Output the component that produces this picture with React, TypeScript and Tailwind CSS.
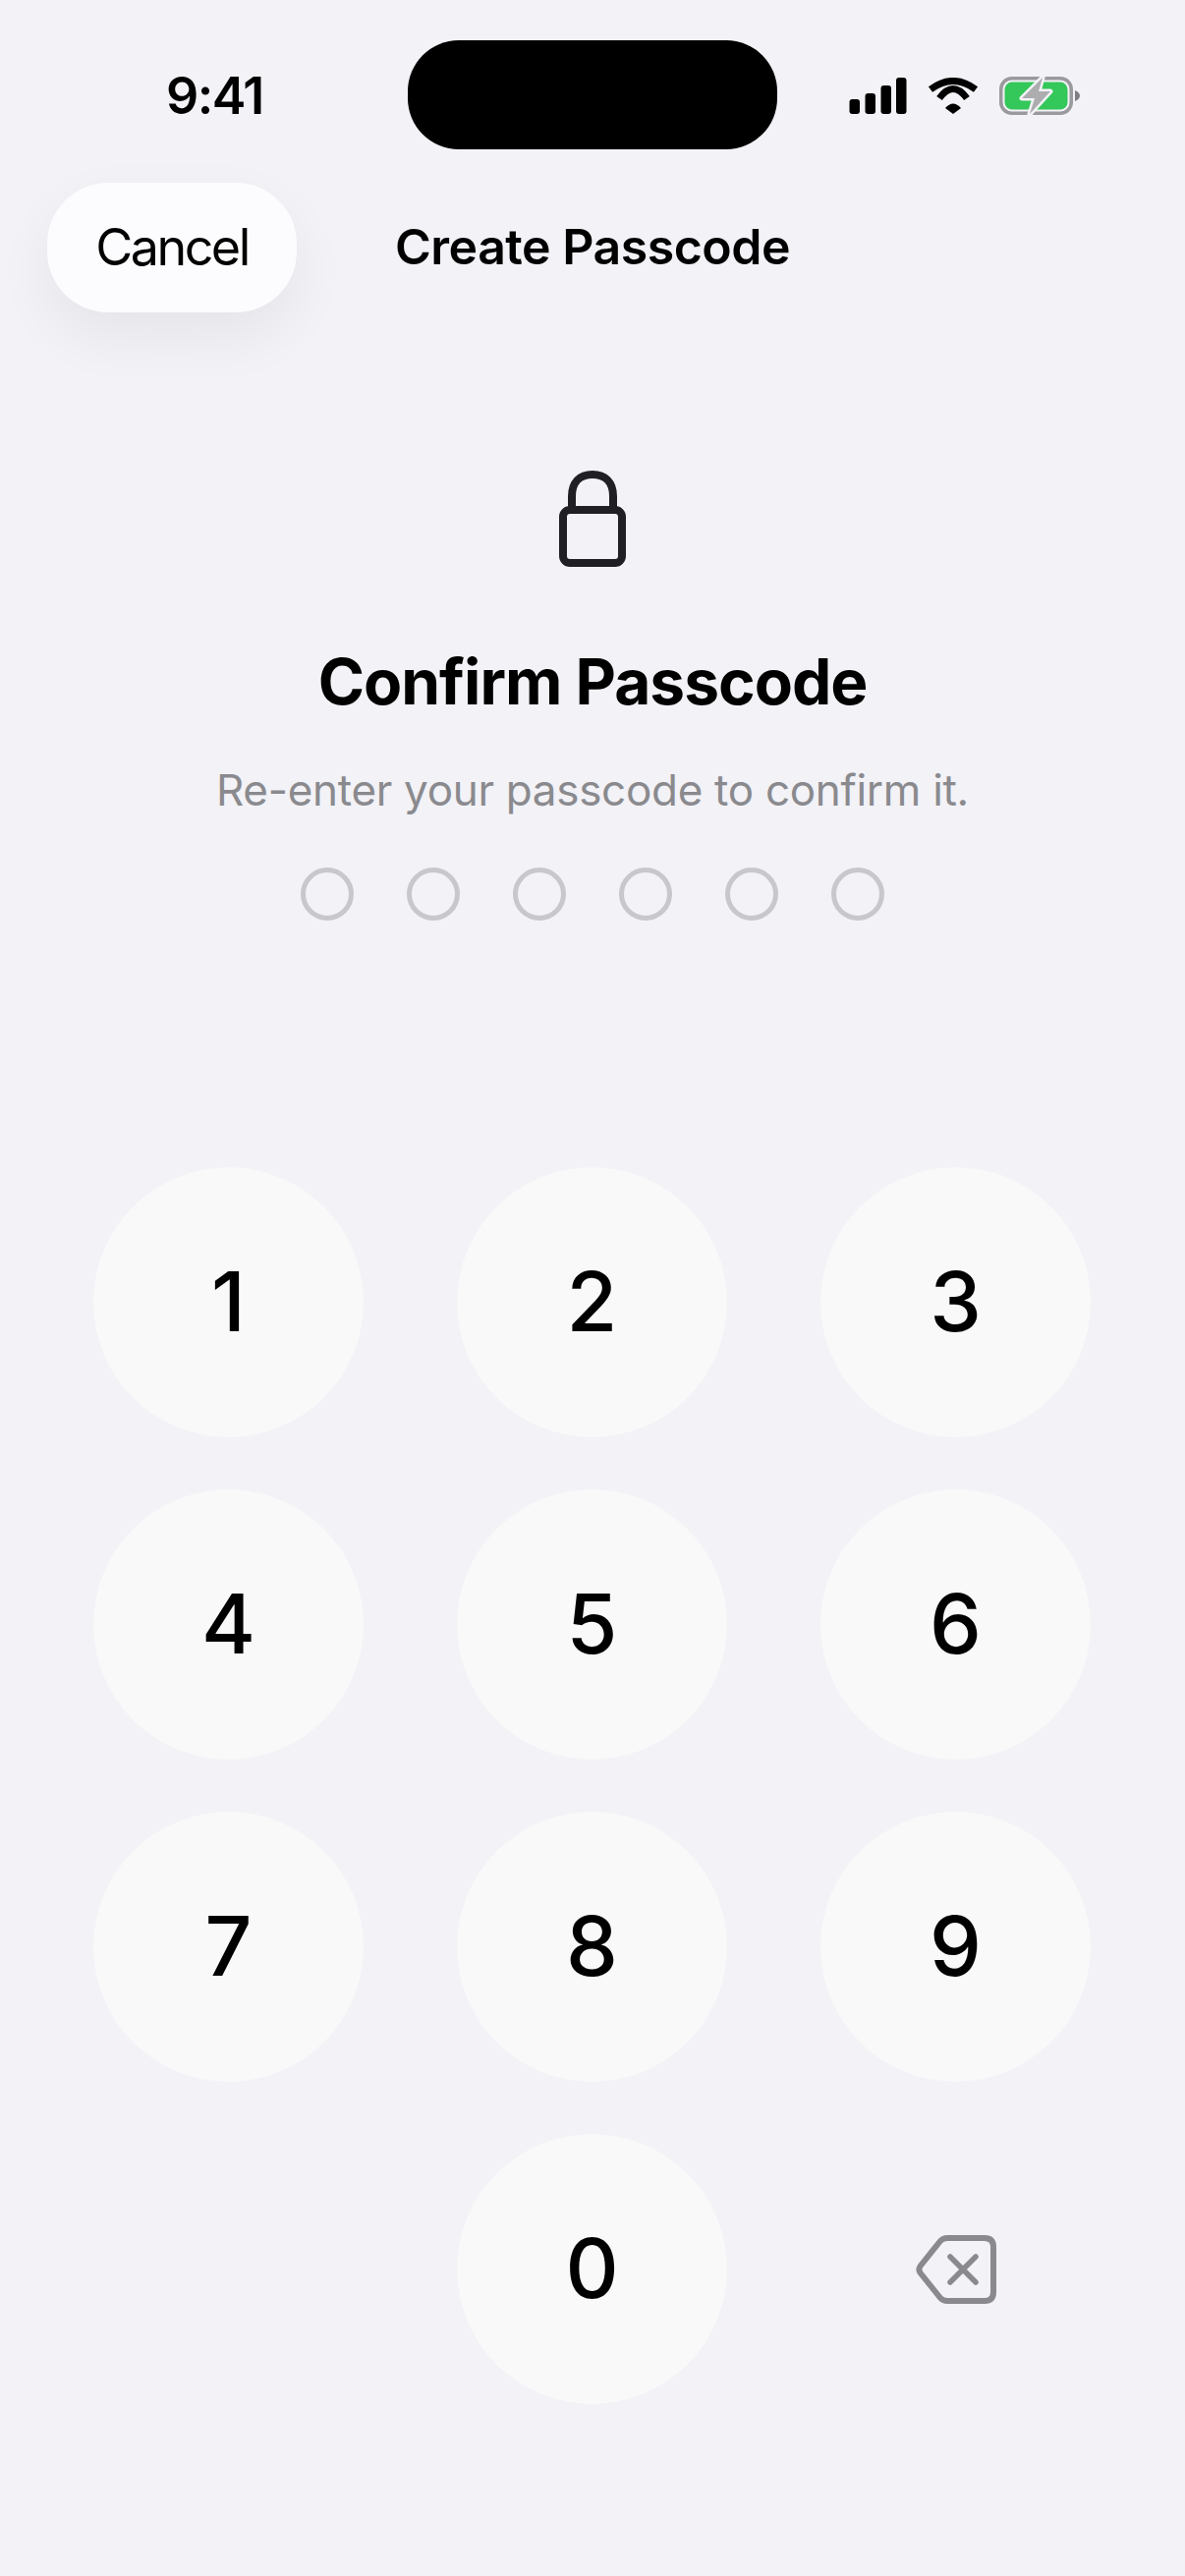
import React from 'react';

const Digit = ({ value }: { value: string }) => (
  <button className="w-[275px] h-[275px] rounded-full bg-[#f9f9f9] flex items-center justify-center pb-[2px] text-[84px] leading-none font-[450] text-black">
    {value}
  </button>
);

const StatusIcons = () => (
  <div className="flex items-center gap-[21px]">
    <svg width="59" height="37" viewBox="0 0 59 37" fill="#000">
      <rect x="0.500" y="22" width="10.500" height="15" rx="3" />
      <rect x="16.500" y="16" width="10.500" height="21" rx="3" />
      <rect x="32.500" y="8" width="10.500" height="29" rx="3" />
      <rect x="48" y="0" width="10.500" height="37" rx="3" />
    </svg>
    <svg width="52" height="37" viewBox="0 0 52 37" fill="none" stroke="#000" strokeWidth="7">
      <path d="M3 12 Q26 -5 49 12" />
      <path d="M12 21 Q26 2 40 21" />
      <path d="M18 31 Q26 22 34 31 L26 37 Z" fill="#000" stroke="none" />
    </svg>
    <svg width="82" height="39" viewBox="0 0 82 39" fill="none">
      <rect x="1.750" y="1.750" width="71.500" height="35.500" rx="11" stroke="#9a9a9d" strokeWidth="3.500" />
      <rect x="5.500" y="5.500" width="64" height="28" rx="7.500" fill="#34c759" />
      <path d="M77 14 C80 15 82 17 82 19.500 C82 22 80 24 77 25 Z" fill="#7f7f83" />
      <path d="M44 1 L23 22 H36 L31 38 L52 15 H40 Z" fill="#adadb0" stroke="#f2f2f7" strokeWidth="5" strokeLinejoin="round" paintOrder="stroke" />
    </svg>
  </div>
);

const App: React.FC = () => {
  return (
    <div className="w-[1206px] h-[2622px] bg-[#f2f2f7] overflow-hidden font-['Inter',sans-serif] text-black">
      {/* Status bar */}
      <div className="flex items-center h-[111px] mt-[41px]">
        <div className="w-[415px] pl-[169px] pt-[3px] text-[52px] leading-none font-semibold tracking-[-1.500px]">9:41</div>
        <div className="w-[376px] h-[111px] rounded-[52px] bg-black" />
        <div className="pl-[73px] pt-[2px]">
          <StatusIcons />
        </div>
      </div>

      {/* Nav */}
      <div className="grid grid-cols-[1fr_auto_1fr] items-center mt-[34px] px-[48px]">
        <button className="justify-self-start w-[254px] h-[132px] rounded-[62px] bg-[#fcfcfe] text-[52px] leading-none tracking-[-2.500px] shadow-[0_24px_60px_rgba(0,0,0,0.06)]">
          Cancel
        </button>
        <h1 className="pb-[2px] text-[50px] leading-none font-semibold tracking-[-0.500px]">Create Passcode</h1>
        <div />
      </div>

      {/* Prompt */}
      <div className="flex flex-col items-center mt-[161px]">
        <svg width="68" height="98" viewBox="0 0 68 98" fill="none" stroke="#1f1f24" strokeWidth="8">
          <path d="M13 42 V26 C13 12 21 4 34 4 C47 4 55 12 55 26 V42" />
          <rect x="4" y="40" width="60" height="54" rx="7" />
        </svg>
        <h2 className="mt-[85px] text-[64px] leading-none font-bold tracking-[-1px]">Confirm Passcode</h2>
        <p className="mt-[56px] text-[44px] leading-none tracking-[-0.300px] text-[#8a8a8e]">Re-enter your passcode to confirm it.</p>
        <div className="flex gap-[54px] mt-[57px]">
          {[0, 1, 2, 3, 4, 5].map((i) => (
            <div key={i} className="w-[54px] h-[54px] rounded-full border-[5px] border-[#c7c7cc]" />
          ))}
        </div>
      </div>

      {/* Keypad */}
      <div className="grid grid-cols-[275px_275px_275px] gap-x-[95px] gap-y-[53px] mt-[251px] ml-[95px]">
        {['1', '2', '3', '4', '5', '6', '7', '8', '9'].map((d) => (
          <Digit key={d} value={d} />
        ))}
        <div />
        <Digit value="0" />
        <div className="flex items-center justify-center">
          <svg width="82" height="70" viewBox="0 0 82 70" fill="none" stroke="#8a8a8e" strokeWidth="6" strokeLinecap="round" strokeLinejoin="round">
            <path d="M32 3 H70 C76 3 79 6 79 12 V58 C79 64 76 67 70 67 H32 C29 67 27 66 25 64 L5 39 C3 36.500 3 33.500 5 31 L25 6 C27 4 29 3 32 3 Z" />
            <path d="M35 22 L61 48 M61 22 L35 48" strokeWidth="5.500" />
          </svg>
        </div>
      </div>
    </div>
  );
};

export default App;
